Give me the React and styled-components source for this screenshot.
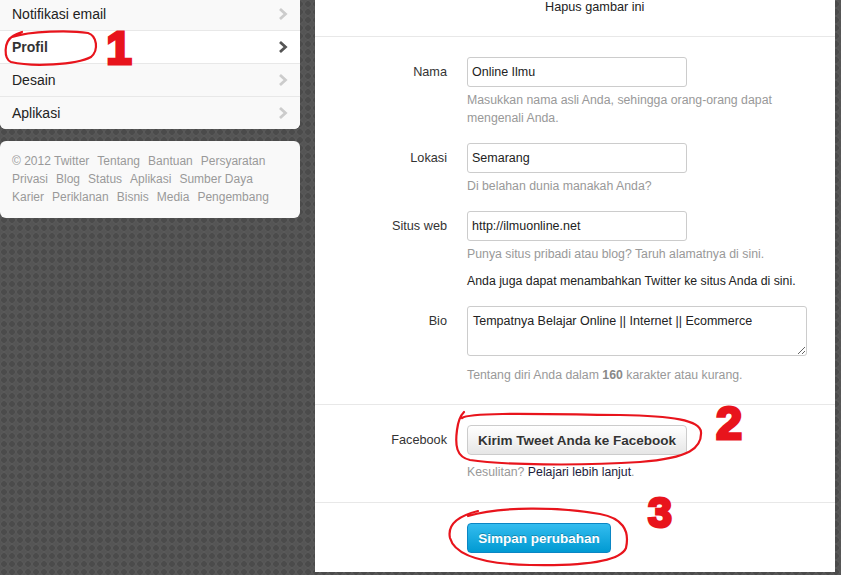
import React from 'react';
import styled, { createGlobalStyle } from 'styled-components';

const GlobalStyle = createGlobalStyle`
    html, body {
        margin: 0;
        padding: 0;
    }
    body {
        font-family: "Liberation Sans", Arial, sans-serif;
        color: #333;
    }
`;

const Page = styled.div`
    position: relative;
    height: 575px;
    overflow: hidden;
    background-color: #555;
    background-image:
        radial-gradient(circle at 4px 4px, #4b4b4b 0, #4b4b4b 2.6px, #5c5c5c 3.2px, transparent 3.9px);
    background-size: 8px 8px;
`;

const Columns = styled.div`
    display: flex;
    align-items: flex-start;
    gap: 15px;
    margin-top: -2px;
`;

const Sidebar = styled.div`
    width: 300px;
    display: flex;
    flex-direction: column;
    gap: 12px;
`;

const NavCard = styled.ul`
    list-style: none;
    margin: 0;
    padding: 0;
    background: #f9f9f9;
    border-radius: 0 0 6px 6px;
    overflow: hidden;
`;

const NavItem = styled.li`
    display: flex;
    align-items: center;
    justify-content: space-between;
    height: 32px;
    padding: 0 12px;
    font-size: 14px;
    color: ${(p) => (p.active ? '#333' : '#222')};
    font-weight: ${(p) => (p.active ? 'bold' : 'normal')};
    background: ${(p) => (p.active ? '#fff' : '#f9f9f9')};
    border-bottom: 1px solid #e8e8e8;

    &:last-child {
        border-bottom: none;
    }
`;

const FooterCard = styled.div`
    display: flex;
    flex-wrap: wrap;
    column-gap: 8px;
    padding: 11px 12px 12px;
    background: #f9f9f9;
    border-radius: 6px;
    font-size: 12px;
    line-height: 18px;
    color: #999;
`;

const Main = styled.div`
    width: 520px;
    background: #fff;
`;

const Section = styled.div`
    padding: ${(p) => p.pad || '20px 0'};
    border-bottom: ${(p) => (p.last ? 'none' : '1px solid #e8e8e8')};
`;

const PhotoLink = styled.div`
    margin-left: 230px;
    font-size: 12.7px;
    line-height: 18px;
    color: #222;
`;

const Field = styled.div`
    display: grid;
    grid-template-columns: 132px 1fr;
    column-gap: 20px;
    margin-top: ${(p) => (p.first ? '0' : '16px')};
`;

const Label = styled.label`
    text-align: right;
    font-size: 12.7px;
    line-height: 30px;
    color: #333;
`;

const Controls = styled.div`
    display: flex;
    flex-direction: column;
    align-items: flex-start;
`;

const TextInput = styled.input`
    box-sizing: border-box;
    width: 220px;
    height: 30px;
    padding: 0 4px;
    border: 1px solid #ccc;
    border-radius: 3px;
    font-family: inherit;
    font-size: 12.5px;
    color: #222;
    outline: none;
`;

const BioInput = styled.textarea`
    box-sizing: border-box;
    display: block;
    width: 340px;
    height: 50px;
    padding: 5px 5px;
    border: 1px solid #ccc;
    border-radius: 3px;
    font-family: inherit;
    font-size: 12.5px;
    line-height: 18px;
    color: #222;
    outline: none;
`;

const Help = styled.p`
    max-width: 340px;
    margin: ${(p) => p.space || '4px'} 0 0;
    font-size: 12.3px;
    line-height: 18px;
    color: ${(p) => (p.dark ? '#222' : '#999')};

    b {
        color: #888;
    }
`;

const DarkLink = styled.span`
    color: #1c1c3c;
`;

const GreyButton = styled.button`
    box-sizing: border-box;
    width: 220px;
    height: 30px;
    border: 1px solid #ccc;
    border-radius: 4px;
    background: linear-gradient(#fff, #e6e6e6);
    font-family: inherit;
    font-size: 13.5px;
    font-weight: bold;
    color: #333;
    text-shadow: 0 1px 0 #fff;
`;

const BlueButton = styled.button`
    box-sizing: border-box;
    width: 144px;
    height: 30px;
    padding: 0;
    border: 1px solid #0b86c4;
    border-radius: 4px;
    background: linear-gradient(#33bcef, #019ad2);
    font-family: inherit;
    font-size: 13.5px;
    font-weight: bold;
    color: #fff;
    text-shadow: 0 -1px 0 rgba(0, 0, 0, 0.25);
`;

const SaveRow = styled.div`
    padding-left: 152px;
`;

const Overlay = styled.svg`
    position: absolute;
    left: 0;
    top: 0;
    pointer-events: none;
`;

const Mark = styled.text`
    font-family: "Liberation Sans", Arial, sans-serif;
    font-weight: bold;
    fill: #e8141c;
    stroke: #e8141c;
    stroke-width: 3;
`;

const Chevron = ({ active }) => (
    <svg width="10" height="14" viewBox="0 0 10 14">
        <polyline
            points="2,2 7.5,7 2,12"
            fill="none"
            stroke={active ? '#555' : '#ccc'}
            strokeWidth="2.8"
        />
    </svg>
);

const navItems = ['Notifikasi email', 'Profil', 'Desain', 'Aplikasi'];

const footerLinks = [
    '© 2012 Twitter', 'Tentang', 'Bantuan', 'Persyaratan', 'Privasi', 'Blog', 'Status',
    'Aplikasi', 'Sumber Daya', 'Karier', 'Periklanan', 'Bisnis', 'Media', 'Pengembang',
];

const Annotations = () => (
    <Overlay width="841" height="575" viewBox="0 0 841 575">
        <g fill="none" stroke="#e8141c" strokeWidth="2.2" strokeLinecap="round">
            <path d="M12,37 C30,31 70,30 88,33 C97,36 99,50 91,57 C76,65 32,67 11,62 C4,59 3,42 13,36 C16,34 19,33 22,32" />
            <path d="M462,418 C470,412 540,414 620,415 C672,416 700,420 701,432 C702,448 690,458 640,462 C580,466 500,465 470,460 C456,457 455,445 457,430 C458,422 460,416 464,412" />
            <path d="M468,516 C500,506 560,507 600,514 C622,518 630,530 626,548 C620,562 580,566 530,565 C485,564 455,556 450,538 C447,524 458,516 478,511" />
        </g>
        <Mark x="119" y="64" fontSize="46" textAnchor="middle">1</Mark>
        <Mark x="729" y="439" fontSize="47" textAnchor="middle">2</Mark>
        <Mark x="660" y="527" fontSize="43" textAnchor="middle">3</Mark>
    </Overlay>
);

const App = () => (
    <Page>
        <GlobalStyle />
        <Columns>
            <Sidebar>
                <NavCard>
                    {navItems.map((item) => (
                        <NavItem key={item} active={item === 'Profil'}>
                            {item}
                            <Chevron active={item === 'Profil'} />
                        </NavItem>
                    ))}
                </NavCard>
                <FooterCard>
                    {footerLinks.map((link) => (
                        <span key={link}>{link}</span>
                    ))}
                </FooterCard>
            </Sidebar>
            <Main>
                <Section pad="0 0 20px">
                    <PhotoLink>Hapus gambar ini</PhotoLink>
                </Section>
                <Section pad="20px 0 20px">
                    <Field first>
                        <Label>Nama</Label>
                        <Controls>
                            <TextInput defaultValue="Online Ilmu" />
                            <Help>Masukkan nama asli Anda, sehingga orang-orang dapat mengenali Anda.</Help>
                        </Controls>
                    </Field>
                    <Field>
                        <Label>Lokasi</Label>
                        <Controls>
                            <TextInput defaultValue="Semarang" />
                            <Help>Di belahan dunia manakah Anda?</Help>
                        </Controls>
                    </Field>
                    <Field>
                        <Label>Situs web</Label>
                        <Controls>
                            <TextInput defaultValue="http://ilmuonline.net" />
                            <Help>Punya situs pribadi atau blog? Taruh alamatnya di sini.</Help>
                            <Help dark space="9px">Anda juga dapat menambahkan Twitter ke situs Anda di sini.</Help>
                        </Controls>
                    </Field>
                    <Field>
                        <Label>Bio</Label>
                        <Controls>
                            <BioInput defaultValue="Tempatnya Belajar Online || Internet || Ecommerce" />
                            <Help space="10px">
                                Tentang diri Anda dalam <b>160</b> karakter atau kurang.
                            </Help>
                        </Controls>
                    </Field>
                </Section>
                <Section pad="20px 0 21px">
                    <Field first>
                        <Label>Facebook</Label>
                        <Controls>
                            <GreyButton>Kirim Tweet Anda ke Facebook</GreyButton>
                            <Help space="8px">
                                Kesulitan? <DarkLink>Pelajari lebih lanjut</DarkLink>.
                            </Help>
                        </Controls>
                    </Field>
                </Section>
                <Section pad="20px 0 19px" last>
                    <SaveRow>
                        <BlueButton>Simpan perubahan</BlueButton>
                    </SaveRow>
                </Section>
            </Main>
        </Columns>
        <Annotations />
    </Page>
);

export default App;
